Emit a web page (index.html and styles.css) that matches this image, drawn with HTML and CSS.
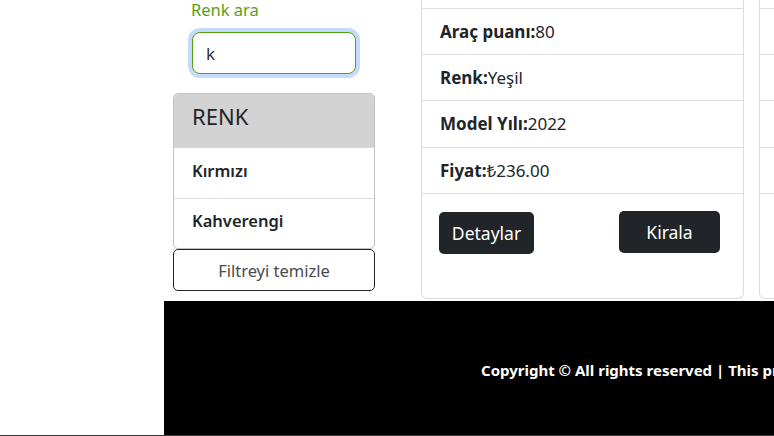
FILE: index.html
```html
<!DOCTYPE html>
<html lang="tr">
<head>
<meta charset="utf-8">
<title>Araçlar</title>
<link rel="stylesheet" href="styles.css">
</head>
<body>
<div class="page">
  <main class="content">
    <aside class="sidebar">
      <label class="search-label" for="renk">Renk ara</label>
      <input id="renk" class="search-input" type="text" value="k">
      <div class="filter-card">
        <div class="filter-head">RENK</div>
        <div class="filter-item">Kırmızı</div>
        <div class="filter-item">Kahverengi</div>
      </div>
      <button class="clear-btn" type="button">Filtreyi temizle</button>
    </aside>
    <section class="cars">
      <div class="car-card">
        <div class="car-row car-row-cut"></div>
        <div class="car-row"><b>Araç puanı:</b>80</div>
        <div class="car-row"><b>Renk:</b>Yeşil</div>
        <div class="car-row car-row-tall"><b>Model Yılı:</b>2022</div>
        <div class="car-row"><b>Fiyat:</b>₺236.00</div>
        <div class="car-actions">
          <button class="btn btn-detail" type="button">Detaylar</button>
          <button class="btn btn-rent" type="button">Kirala</button>
        </div>
      </div>
      <div class="car-card">
        <div class="car-row car-row-cut"></div>
        <div class="car-row"><b>Araç puanı:</b>75</div>
        <div class="car-row"><b>Renk:</b>Kırmızı</div>
        <div class="car-row car-row-tall"><b>Model Yılı:</b>2021</div>
        <div class="car-row"><b>Fiyat:</b>₺310.00</div>
        <div class="car-actions">
          <button class="btn btn-detail" type="button">Detaylar</button>
          <button class="btn btn-rent" type="button">Kirala</button>
        </div>
      </div>
    </section>
  </main>
  <footer class="footer">
    <p class="footer-text">Copyright © All rights reserved | This project is made by student</p>
  </footer>
</div>
<div class="scroll-line"></div>
</body>
</html>
```

FILE: styles.css
```css
* { box-sizing: border-box; }

html, body {
  margin: 0;
  padding: 0;
  overflow: hidden;
  background: #fff;
}

body {
  font-family: "Noto Sans", "Open Sans", sans-serif;
  font-size: 16px;
  color: #212529;
  width: 774px;
  height: 436px;
}

.page {
  margin-left: 164px;
  width: 1000px;
}

.content {
  display: flex;
  align-items: flex-start;
  gap: 46px;
}

.sidebar {
  width: 211px;
  padding-left: 9px;
  display: flex;
  flex-direction: column;
}

.search-label {
  display: block;
  margin-left: 18px;
  color: #55a01a;
  font-size: 16.5px;
  line-height: 20px;
}

.search-input {
  display: block;
  margin: 12px 0 0 19px;
  width: 164px;
  height: 42px;
  border: 1px solid #56a10f;
  border-radius: 8px;
  padding: 0 13px;
  font-family: inherit;
  font-size: 17px;
  color: #333;
  outline: none;
  box-shadow: 0 0 0 4px #c5dbfd;
}

.filter-card {
  margin-top: 19px;
  border: 1px solid #c2c2c2;
  border-radius: 5px;
  overflow: hidden;
}

.filter-head {
  height: 54px;
  background: #d3d3d3;
  padding: 0 18px 9px;
  display: flex;
  align-items: center;
  font-size: 22px;
  border-bottom: 1px solid #d9d9d9;
}

.filter-item {
  height: 50px;
  padding: 0 18px 6px;
  display: flex;
  align-items: center;
  font-weight: 600;
  font-size: 16.5px;
  border-top: 1px solid #dedede;
}

.filter-head + .filter-item { border-top: 0; }

.clear-btn {
  height: 42px;
  width: 202px;
  background: #fff;
  border: 1px solid #212529;
  border-radius: 5px;
  font-family: inherit;
  font-size: 16.5px;
  color: #4a4a4a;
}

.cars {
  display: flex;
  gap: 15px;
}

.car-card {
  width: 323px;
  flex-shrink: 0;
  border: 1px solid #dcdcdc;
  border-top: 0;
  border-radius: 0 0 6px 6px;
  margin-bottom: 2px;
}

.car-row {
  padding: 10px 18px;
  font-size: 17px;
  line-height: 25px;
  border-bottom: 1px solid #dedede;
  white-space: nowrap;
}

.car-row b { font-weight: 700; }

.car-row-cut {
  height: 9px;
  padding: 0;
}

.car-row-tall { padding-bottom: 11px; }

.car-actions {
  display: flex;
  justify-content: space-between;
  align-items: flex-start;
  padding: 17px 23px 44px 17px;
}

.btn {
  height: 42px;
  background: #212529;
  color: #fff;
  border: 0;
  border-radius: 5px;
  font-family: inherit;
  font-size: 17.5px;
  padding: 0;
}

.btn-detail {
  margin-top: 1px;
  width: 95px;
}

.btn-rent {
  width: 101px;
}

.footer {
  background: #000;
  height: 134px;
  display: flex;
  align-items: center;
  padding-left: 317px;
  padding-top: 4px;
}

.footer-text {
  margin: 0;
  color: #fff;
  font-weight: 700;
  font-size: 15px;
  white-space: nowrap;
}

.scroll-line {
  height: 1px;
  background: #3a3a3a;
}
```
